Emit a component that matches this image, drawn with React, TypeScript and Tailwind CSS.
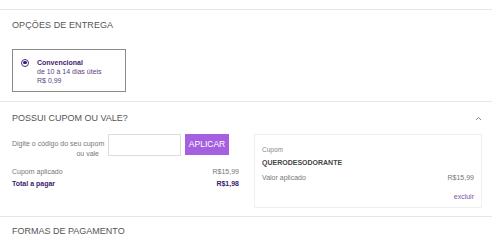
import React from "react";

export default function App() {
  const font = { fontFamily: '"Liberation Sans", Arial, sans-serif' };
  return (
    <div className="w-[500px] h-[241px] bg-white overflow-hidden" style={font}>
      <div className="w-[492px]">
        <div className="h-[10px] border-b border-[#e6e6e6]" />

        {/* Delivery */}
        <div className="pt-[9px] pb-[9px] px-[12px] border-b border-[#e6e6e6]">
          <div className="text-[9px] leading-[12px] text-[#555] tracking-[0.1px]">OPÇÕES DE ENTREGA</div>
          <div className="mt-[18px] w-[114px] h-[43px] border border-[#8a8a8a] pt-[8px] pl-[8px] flex items-start">
            <div className="mt-[0.5px] w-[8px] h-[8px] rounded-full border border-[#4a2a85] flex items-center justify-center shrink-0">
              <div className="w-[3.5px] h-[3.5px] rounded-full bg-[#3a1d6e]" />
            </div>
            <div className="ml-[8px] text-[7px] leading-[9px]">
              <div className="font-bold text-[#3a1d6e]">Convencional</div>
              <div className="text-[#5b4485]">de 10 à 14 dias úteis</div>
              <div className="text-[#5b4485]">R$ 0,99</div>
            </div>
          </div>
        </div>

        {/* Coupon */}
        <div className="pt-[10px] pb-[8px] pl-[12px] pr-[10px] border-b border-[#e6e6e6]">
          <div className="flex items-center justify-between">
            <div className="text-[9px] leading-[12px] text-[#555]">POSSUI CUPOM OU VALE?</div>
            <svg width="7" height="5" viewBox="0 0 7 5" className="mr-[0px]">
              <path d="M1 4 L3.5 1.5 L6 4" fill="none" stroke="#888" strokeWidth="1" />
            </svg>
          </div>
          <div className="mt-[10px] flex items-start gap-[15px]">
            <div className="w-[227px]">
              <div className="flex items-start gap-[4px]">
                <div className="w-[92px] shrink-0 text-right text-[7px] leading-[10px] text-[#777] mt-[5px] whitespace-nowrap">
                  <div>Digite o código do seu cupom</div>
                  <div className="mr-[5px]">ou vale</div>
                </div>
                <div className="w-[73px] h-[22px] shrink-0 border border-[#dcdcdc] bg-white" />
                <div className="w-[44px] h-[21px] shrink-0 bg-[#a55fe0] text-white text-[8.5px] flex items-center justify-center">
                  APLICAR
                </div>
              </div>
              <div className="mt-[7px] text-[7px] leading-[12px]">
                <div className="flex justify-between text-[#777]">
                  <span>Cupom aplicado</span>
                  <span>R$15,99</span>
                </div>
                <div className="flex justify-between font-bold text-[#3a1d6e]">
                  <span>Total a pagar</span>
                  <span>R$1,98</span>
                </div>
              </div>
            </div>
            <div className="w-[228px] h-[74px] border border-[#efefef] pt-[10px] px-[7px]">
              <div className="text-[6.5px] leading-[9px] text-[#888]">Cupom</div>
              <div className="mt-[4px] text-[7px] leading-[10px] font-bold text-[#444]">QUERODESODORANTE</div>
              <div className="mt-[5px] flex justify-between text-[7px] leading-[10px] text-[#777]">
                <span>Valor aplicado</span>
                <span>R$15,99</span>
              </div>
              <div className="mt-[9px] text-right text-[7px] leading-[10px] text-[#7a52aa]">excluir</div>
            </div>
          </div>
        </div>

        {/* Payment */}
        <div className="pt-[8px] px-[12px]">
          <div className="text-[9px] leading-[12px] text-[#555]">FORMAS DE PAGAMENTO</div>
        </div>
      </div>
    </div>
  );
}
